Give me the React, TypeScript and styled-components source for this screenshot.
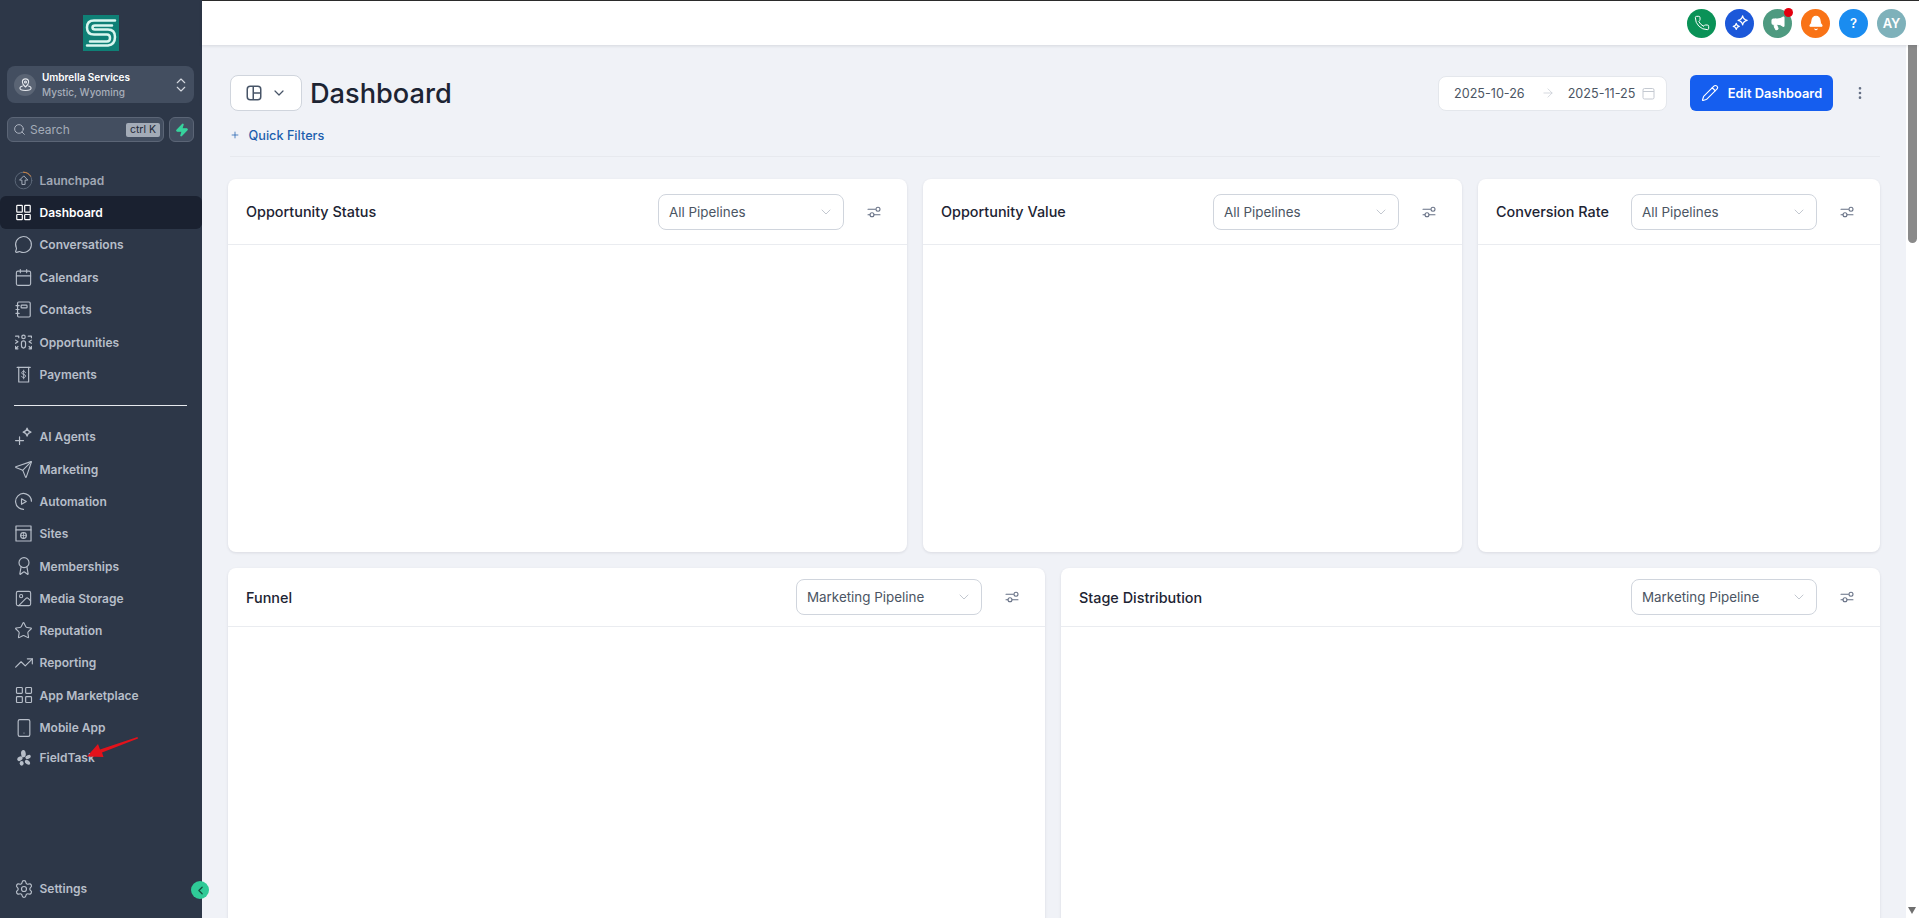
import type { ReactNode } from "react";
import styled, { createGlobalStyle } from "styled-components";
import {
  ArrowRight,
  Award,
  Bell,
  Calendar,
  ChevronDown,
  ChevronLeft,
  ChevronsUpDown,
  EllipsisVertical,
  Image,
  LayoutGrid,
  MessageCircle,
  Megaphone,
  Pencil,
  Phone,
  Plus,
  Search,
  Send,
  Settings,
  Smartphone,
  Star,
  TrendingUp,
  Zap,
} from "lucide-react";

const GlobalStyle = createGlobalStyle`
  html, body {
    margin: 0;
    height: 100%;
    overflow: hidden;
    font-family: Inter, "Liberation Sans", sans-serif;
  }

  * {
    box-sizing: border-box;
  }
`;

// hand drawn icons, the packages have nothing close to these
const IconSvg = ({ children }: { children: ReactNode }) => (
  <svg width="19" height="19" viewBox="0 0 24 24" fill="none" stroke="currentColor" strokeWidth="1.5" strokeLinecap="round" strokeLinejoin="round">
    {children}
  </svg>
);

const LaunchpadIcon = () => (
  <svg width="19" height="19" viewBox="0 0 24 24" fill="none" strokeWidth="1.2" strokeLinecap="round" strokeLinejoin="round">
    <circle cx="12" cy="12" r="10.5" stroke="#5d6879" />
    <path d="M12 1.5a10.5 10.5 0 0 1 9 5" stroke="#e08a3c" />
    <path d="M12 6.5 7 11.5h3v5.5h4v-5.5h3z" stroke="#aab2bf" />
  </svg>
);

const DashboardIcon = () => (
  <IconSvg>
    <rect x="3.500" y="3" width="7" height="8.500" rx="0.8" />
    <rect x="13.500" y="3" width="7" height="8.500" rx="0.8" />
    <rect x="3.500" y="14.500" width="7" height="6.500" rx="0.8" />
    <rect x="13.500" y="14.500" width="7" height="6.500" rx="0.8" />
  </IconSvg>
);

const ContactsIcon = () => (
  <IconSvg>
    <rect x="4.500" y="2.500" width="16" height="19" rx="1.500" />
    <rect x="9" y="6.500" width="7.500" height="3.500" rx="1" />
    <path d="M2.500 7h4M2.500 12h4M2.500 17h4" />
  </IconSvg>
);

const OpportunitiesIcon = () => (
  <IconSvg>
    <circle cx="12" cy="5" r="2.200" />
    <path d="M12 10c-2 0-2.600 1.400-2.600 2.600v3c0 1.400.9 3.400 2.600 3.400s2.600-2 2.600-3.400v-3C14.600 11.400 14 10 12 10z" />
    <path d="M2 4h4v2M18 4h4v2M2 9l3 2-3 2M22 9l-3 2 3 2M2 20l3-3M2 17v3h3M22 20l-3-3M22 17v3h-3" />
  </IconSvg>
);

const PaymentsIcon = () => (
  <IconSvg>
    <path d="M4 3h16.500" />
    <path d="M6 3v18.500h12.500V3" />
    <path d="M14.500 9.500c-.4-1-1.400-1.500-2.300-1.500-1.300 0-2.400.6-2.400 1.900 0 2.800 4.800 1.200 4.800 4 0 1.300-1.200 2-2.400 2-1.200 0-2.200-.6-2.600-1.600M12.200 6.500v11" strokeWidth="1.200" />
  </IconSvg>
);

const AgentsIcon = () => (
  <IconSvg>
    <path d="M16.500 1.500c.5 3 1.600 4.300 5 5-3.400.7-4.500 2-5 5-.5-3-1.600-4.300-5-5 3.400-.7 4.500-2 5-5z" />
    <path d="M7 12.500v9.500M2 17.200h10" />
  </IconSvg>
);

const AutomationIcon = () => (
  <IconSvg>
    <path d="M22 11.500A10 10 0 0 0 5 4.800a10 10 0 0 0 1 15.200A10 10 0 0 0 12 22" />
    <path d="m9.500 8.500 6 3.500-6 3.500z" />
  </IconSvg>
);

const SitesIcon = () => (
  <IconSvg>
    <rect x="2.500" y="2.500" width="19" height="19" />
    <path d="M2.500 7.500h19" />
    <circle cx="12" cy="14.500" r="3.600" />
    <path d="M8.400 14.500h7.200M12 11v7" strokeWidth="1" />
  </IconSvg>
);

const FieldTaskIcon = () => (
  <svg width="14" height="16" viewBox="0 0 24 24" fill="currentColor" preserveAspectRatio="none">
    <ellipse cx="11" cy="5.500" rx="4" ry="5.500" transform="rotate(-10 11 5.500)" />
    <ellipse cx="5" cy="13" rx="4.800" ry="3.200" transform="rotate(-25 5 13)" />
    <ellipse cx="19" cy="10.500" rx="4.800" ry="2.800" transform="rotate(-20 19 10.500)" />
    <ellipse cx="8" cy="20" rx="3.400" ry="3.600" />
    <ellipse cx="18" cy="18.500" rx="4.800" ry="3" transform="rotate(30 18 18.500)" />
  </svg>
);

const TuneIcon = () => (
  <svg width="16" height="16" viewBox="0 0 24 24" fill="none" stroke="#667085" strokeWidth="1.600" strokeLinecap="round">
    <path d="M3 8h11M3 16h3" />
    <circle cx="18" cy="8" r="3" />
    <circle cx="9" cy="16" r="3" />
    <path d="M12 16h9" />
  </svg>
);

const LogoMark = () => (
  <svg width="36" height="36" viewBox="0 0 36 36" fill="none">
    <rect width="36" height="36" fill="#0f8076" />
    <g stroke="#d9f6ef" strokeWidth="2.500" strokeLinecap="round">
      <path d="M32 5.500H11Q4 5.500 4 12.500T11 19.500H24Q27 19.500 27 23T24 26.500H7" />
      <path d="M29 10.500H12Q9.500 10.500 9.500 12.500T12 14.500H25Q32 14.500 32 22T25 30.500H4" />
    </g>
  </svg>
);

const LocationIcon = () => (
  <svg width="15" height="15" viewBox="0 0 24 24" fill="none" stroke="#e6e9ee" strokeWidth="1.700" strokeLinecap="round" strokeLinejoin="round">
    <path d="M12 16c-3-2.600-5-5-5-8a5 5 0 0 1 10 0c0 3-2 5.400-5 8z" />
    <circle cx="12" cy="8" r="1.600" />
    <path d="M7 14.500c-2.500.7-4 1.800-4 3.200C3 19.900 7 21.500 12 21.500s9-1.600 9-3.800c0-1.400-1.500-2.500-4-3.200" />
  </svg>
);

const StarsIcon = () => (
  <svg width="18" height="18" viewBox="0 0 24 24" fill="none" stroke="#ffffff" strokeWidth="1.700" strokeLinejoin="round" strokeLinecap="round">
    <path d="M15.500 2.500c.6 3.400 2.200 5 6 6-3.800 1-5.400 2.600-6 6-.6-3.400-2.200-5-6-6 3.800-1 5.400-2.600 6-6z" />
    <path d="M7 12.500c.4 2.400 1.400 3.500 4 4-2.600.5-3.600 1.600-4 4-.4-2.400-1.400-3.500-4-4 2.600-.5 3.600-1.600 4-4z" />
  </svg>
);

const ViewLayoutIcon = () => (
  <svg width="18" height="18" viewBox="0 0 24 24" fill="none" stroke="#475467" strokeWidth="2">
    <rect x="3" y="3" width="18" height="18" rx="4" />
    <path d="M11 3v18M11 12h10" />
  </svg>
);

const CalendarBoxIcon = () => (
  <svg width="13" height="13" viewBox="0 0 13 13" fill="none" stroke="#c4c9d1" strokeWidth="1">
    <rect x="1" y="1.500" width="11" height="10.500" rx="1.500" />
    <path d="M1 4.500h11" />
  </svg>
);

const NAV_TOP = [
  { label: "Launchpad", icon: <LaunchpadIcon />, dim: true },
  { label: "Dashboard", icon: <DashboardIcon />, active: true },
  { label: "Conversations", icon: <MessageCircle size={19} strokeWidth={1.4} /> },
  { label: "Calendars", icon: <Calendar size={19} strokeWidth={1.4} /> },
  { label: "Contacts", icon: <ContactsIcon /> },
  { label: "Opportunities", icon: <OpportunitiesIcon /> },
  { label: "Payments", icon: <PaymentsIcon /> },
];

const NAV_BOTTOM = [
  { label: "AI Agents", icon: <AgentsIcon /> },
  { label: "Marketing", icon: <Send size={19} strokeWidth={1.4} /> },
  { label: "Automation", icon: <AutomationIcon /> },
  { label: "Sites", icon: <SitesIcon /> },
  { label: "Memberships", icon: <Award size={20} strokeWidth={1.4} /> },
  { label: "Media Storage", icon: <Image size={19} strokeWidth={1.4} /> },
  { label: "Reputation", icon: <Star size={19} strokeWidth={1.4} /> },
  { label: "Reporting", icon: <TrendingUp size={20} strokeWidth={1.4} /> },
  { label: "App Marketplace", icon: <LayoutGrid size={20} strokeWidth={1.4} /> },
  { label: "Mobile App", icon: <Smartphone size={20} strokeWidth={1.4} /> },
  { label: "FieldTask", icon: <FieldTaskIcon />, compact: true },
];

const TOP_ROW = [
  { title: "Opportunity Status", value: "All Pipelines" },
  { title: "Opportunity Value", value: "All Pipelines" },
  { title: "Conversion Rate", value: "All Pipelines" },
];

const BOTTOM_ROW = [
  { title: "Funnel", value: "Marketing Pipeline" },
  { title: "Stage Distribution", value: "Marketing Pipeline" },
];

type CardProps = { title: string; value: string; low?: boolean };

const Card = ({ title, value, low }: CardProps) => (
  <CardLayout>
    <CardHeader $low={low}>
      <CardTitle>{title}</CardTitle>
      <SelectBox>
        {value}
        <ChevronDown size={16} color="#b4bac4" strokeWidth={1.2} />
      </SelectBox>
      <TuneButton>
        <TuneIcon />
      </TuneButton>
    </CardHeader>
  </CardLayout>
);

const App = () => {
  return (
    <>
      <GlobalStyle />
      <Page>
        <Sidebar>
          <LogoBox>
            <LogoMark />
          </LogoBox>

          <LocationBox>
            <LocationAvatar>
              <LocationIcon />
            </LocationAvatar>
            <LocationInfo>
              <LocationName>Umbrella Services</LocationName>
              <LocationPlace>Mystic, Wyoming</LocationPlace>
            </LocationInfo>
            <ChevronsUpDown size={18} color="#d5d9e0" strokeWidth={1.5} />
          </LocationBox>

          <SearchRow>
            <SearchBox>
              <Search size={13} color="#aeb5c1" strokeWidth={1.8} />
              <SearchText>Search</SearchText>
              <Shortcut>ctrl K</Shortcut>
            </SearchBox>
            <BoltButton>
              <Zap size={14} color="#37d39d" fill="#37d39d" />
            </BoltButton>
          </SearchRow>

          <NavList>
            {NAV_TOP.map((item) => (
              <NavItem key={item.label} $active={item.active} $dim={item.dim} $rowHeight={32.4}>
                <NavIcon>{item.icon}</NavIcon>
                {item.label}
              </NavItem>
            ))}
          </NavList>
          <NavDivider />
          <NavList>
            {NAV_BOTTOM.map((item) => (
              <NavItem key={item.label} $rowHeight={item.compact ? 28 : 32.3}>
                <NavIcon>{item.icon}</NavIcon>
                {item.label}
              </NavItem>
            ))}
          </NavList>

          <SettingsBox>
            <NavItem $rowHeight={32.3}>
              <NavIcon>
                <Settings size={20} strokeWidth={1.4} />
              </NavIcon>
              Settings
            </NavItem>
          </SettingsBox>

          <CollapseToggle>
            <ChevronLeft size={13} color="#14503f" strokeWidth={2.4} />
          </CollapseToggle>

          {/* red note someone drew on the screenshot */}
          <ArrowNote width="64" height="32" viewBox="0 0 64 32">
            <path d="M57 6.500 21 20.500l1.500 4.500L6 24.500 17 12l2 5.500L56.500 5z" fill="#e3121b" />
          </ArrowNote>
        </Sidebar>

        <MainColumn>
          <TopBar>
            <RoundButton $color="#0a9257">
              <Phone size={16} strokeWidth={1.5} />
            </RoundButton>
            <RoundButton $color="#1c58d9">
              <StarsIcon />
            </RoundButton>
            <RoundButton $color="#4e9a80">
              <Megaphone size={16} fill="#fff" strokeWidth={1.6} />
              <RedDot />
            </RoundButton>
            <RoundButton $color="#f97316">
              <Bell size={16} fill="#fff" strokeWidth={1.6} />
            </RoundButton>
            <RoundButton $color="#1a8cf0">?</RoundButton>
            <RoundButton $color="#7eb1ba">AY</RoundButton>
          </TopBar>

          <BodyRow>
            <Content>
              <HeaderBlock>
                <HeaderRow>
                  <ViewButton>
                    <ViewLayoutIcon />
                    <ChevronDown size={16} strokeWidth={1.8} />
                  </ViewButton>
                  <PageTitle>Dashboard</PageTitle>
                  <DateBox>
                    <DateText>2025-10-26</DateText>
                    <DateArrow>
                      <ArrowRight size={14} color="#c4c9d1" strokeWidth={1.2} />
                    </DateArrow>
                    <DateText>2025-11-25</DateText>
                    <DateCalendar>
                      <CalendarBoxIcon />
                    </DateCalendar>
                  </DateBox>
                  <EditButton>
                    <Pencil size={18} strokeWidth={1.5} />
                    Edit Dashboard
                  </EditButton>
                  <MoreButton>
                    <EllipsisVertical size={16} strokeWidth={2} />
                  </MoreButton>
                </HeaderRow>
                <FilterRow>
                  <Plus size={10} strokeWidth={1.8} />
                  <FilterLabel>Quick Filters</FilterLabel>
                </FilterRow>
              </HeaderBlock>

              <CardRowTop>
                {TOP_ROW.map((card) => (
                  <Card key={card.title} title={card.title} value={card.value} />
                ))}
              </CardRowTop>
              <CardRowBottom>
                {BOTTOM_ROW.map((card) => (
                  <Card key={card.title} title={card.title} value={card.value} low />
                ))}
              </CardRowBottom>
            </Content>

            <ScrollRail>
              <ScrollThumb />
              <ScrollArrow />
            </ScrollRail>
          </BodyRow>
        </MainColumn>
      </Page>
    </>
  );
};

export default App;

const Page = styled.div`
  display: flex;
  width: 100%;
  height: 100vh;
  overflow: hidden;
`;

const Sidebar = styled.aside`
  position: relative;
  flex: 0 0 202px;

  display: flex;
  flex-direction: column;

  background: #2d3748;
`;

const LogoBox = styled.div`
  display: flex;
  justify-content: center;

  padding: 15px 0;
`;

const LocationBox = styled.div`
  display: flex;
  align-items: center;
  gap: 6px;

  height: 37px;
  margin: 0 8px 0 7px;
  padding: 0 4px 0 7px;

  background: #434e60;
  border-radius: 8px;
`;

const LocationAvatar = styled.div`
  flex: 0 0 22px;

  display: flex;
  align-items: center;
  justify-content: center;

  height: 22px;

  background: #5a6474;
  border-radius: 50%;
`;

const LocationInfo = styled.div`
  flex: 1;

  display: flex;
  flex-direction: column;
  gap: 2px;
`;

const LocationName = styled.span`
  color: #ffffff;
  font-size: 10px;
  font-weight: 600;
  line-height: 13px;
`;

const LocationPlace = styled.span`
  color: #a8afbb;
  font-size: 10px;
  font-weight: 500;
  line-height: 13px;
`;

const SearchRow = styled.div`
  display: flex;
  gap: 5px;

  height: 25px;
  margin: 14px 8px 22px 7px;
`;

const SearchBox = styled.div`
  flex: 1;

  display: flex;
  align-items: center;
  gap: 4px;

  padding: 0 3px 0 5px;

  background: #434e60;
  border: 1px solid #5b6576;
  border-radius: 6px;
`;

const SearchText = styled.span`
  flex: 1;

  color: #a4acb8;
  font-size: 12px;
`;

const Shortcut = styled.span`
  padding: 1px 4px;

  color: #1f2937;
  font-size: 10.500px;
  line-height: 12px;

  background: #a3abb7;
  border-radius: 2px;
`;

const BoltButton = styled.div`
  flex: 0 0 25px;

  display: flex;
  align-items: center;
  justify-content: center;

  background: #434e60;
  border: 1px solid #5b6576;
  border-radius: 6px;
`;

const NavList = styled.nav`
  display: flex;
  flex-direction: column;
`;

const NavItem = styled.div<{ $active?: boolean; $dim?: boolean; $rowHeight: number }>`
  display: flex;
  align-items: center;
  gap: 6.500px;

  height: ${({ $rowHeight }) => $rowHeight}px;
  padding-left: 14px;

  color: ${({ $active, $dim }) => ($active ? "#ffffff" : $dim ? "#a0a7b4" : "#b7bec9")};
  font-size: 12px;
  font-weight: 600;

  background: ${({ $active }) => ($active ? "#1a2130" : "transparent")};
  border-radius: 6px;
`;

const NavIcon = styled.span`
  flex: 0 0 19px;
  min-width: 0;

  display: flex;
  align-items: center;
  justify-content: center;

  & > svg {
    flex-shrink: 0;
  }
`;

const NavDivider = styled.div`
  height: 1px;
  margin: 14px 15px 15px 14px;

  background: #e6e9ee;
`;

const SettingsBox = styled.div`
  margin-top: auto;
  padding-bottom: 13px;
`;

const CollapseToggle = styled.div`
  position: absolute;
  right: -7px;
  bottom: 19px;
  z-index: 2;

  display: flex;
  align-items: center;
  justify-content: center;

  width: 18px;
  height: 18px;

  background: #2fca97;
  border-radius: 50%;
`;

const ArrowNote = styled.svg`
  position: absolute;
  left: 81px;
  top: 732px;
`;

const MainColumn = styled.div`
  flex: 1;
  min-width: 0;

  display: flex;
  flex-direction: column;
`;

const TopBar = styled.header`
  position: relative;
  z-index: 1;
  flex: 0 0 45px;

  display: flex;
  align-items: center;
  justify-content: flex-end;
  gap: 9px;

  padding-right: 13px;

  background: #ffffff;
  border-top: 1px solid #2b2b2b;
  box-shadow: 0 1px 3px rgba(16, 24, 40, 0.12);
`;

const RoundButton = styled.div<{ $color: string }>`
  position: relative;

  display: flex;
  align-items: center;
  justify-content: center;

  width: 29px;
  height: 29px;

  color: #ffffff;
  font-size: 13px;
  font-weight: 600;

  background: ${({ $color }) => $color};
  border-radius: 50%;
`;

const RedDot = styled.span`
  position: absolute;
  top: -1px;
  right: -1px;

  width: 9px;
  height: 9px;

  background: #e3000f;
  border-radius: 50%;
`;

const BodyRow = styled.div`
  flex: 1;
  min-height: 0;

  display: flex;
`;

const Content = styled.main`
  flex: 1;
  min-width: 0;

  display: flex;
  flex-direction: column;
  gap: 16px;

  padding: 30px 26px 0;
  overflow: hidden;

  background: #f0f2f7;
`;

const HeaderBlock = styled.div`
  flex: none;

  margin: 0 0 6px 2px;
  padding-bottom: 11px;

  border-bottom: 1px solid #e7e9ee;
`;

const HeaderRow = styled.div`
  display: flex;
  align-items: center;

  height: 36px;
`;

const ViewButton = styled.div`
  display: flex;
  align-items: center;
  justify-content: center;
  gap: 8px;

  width: 72px;
  height: 36px;

  color: #475467;

  background: #ffffff;
  border: 1px solid #d0d5dd;
  border-radius: 8px;
`;

const PageTitle = styled.h1`
  flex: 1;

  margin: 0 0 0 8px;

  color: #1d2433;
  font-size: 27.200px;
  font-weight: 500;
`;

const DateBox = styled.div`
  display: flex;
  align-items: center;

  width: 229px;
  height: 35px;
  padding-left: 15px;

  background: #ffffff;
  border: 1px solid #e4e7ec;
  border-radius: 8px;
`;

const DateText = styled.span`
  flex: 0 0 70px;

  color: #4b5563;
  font-size: 12.600px;
  white-space: nowrap;
`;

const DateArrow = styled.span`
  display: flex;

  margin: 0 13px 0 16px;
`;

const DateCalendar = styled.span`
  display: flex;

  margin-left: 4px;
`;

const EditButton = styled.div`
  display: flex;
  align-items: center;
  justify-content: center;
  gap: 9px;

  width: 143px;
  height: 36px;
  margin-left: 23px;

  color: #ffffff;
  font-size: 12.800px;
  font-weight: 600;

  background: #155eef;
  border-radius: 6px;
`;

const MoreButton = styled.div`
  display: flex;
  align-items: center;
  justify-content: center;

  width: 20px;
  margin: 0 10px 0 17px;

  color: #667085;
`;

const FilterRow = styled.div`
  display: flex;
  align-items: center;
  gap: 8.500px;

  height: 20px;
  margin-top: 14px;

  color: #1d5fae;
`;

const FilterLabel = styled.span`
  font-size: 12.700px;
  font-weight: 500;
`;

const CardRowTop = styled.section`
  flex: 0 0 373px;

  display: grid;
  grid-template-columns: 679px 539px 1fr;
  gap: 16px;
`;

const CardRowBottom = styled.section`
  flex: 0 0 600px;

  display: grid;
  grid-template-columns: 817px 1fr;
  gap: 16px;
`;

const CardLayout = styled.article`
  background: #ffffff;
  border-radius: 8px;
  box-shadow: 0 1px 3px rgba(16, 24, 40, 0.1);
`;

const CardHeader = styled.div<{ $low?: boolean }>`
  display: flex;
  align-items: center;

  height: ${({ $low }) => ($low ? "59px" : "66px")};
  padding: 0 25px 0 18px;

  border-bottom: 1px solid #eaecf0;
`;

const CardTitle = styled.h2`
  flex: 1;

  margin: 0;

  color: #1d2433;
  font-size: 14.400px;
  font-weight: 500;
`;

const SelectBox = styled.div`
  display: flex;
  align-items: center;
  justify-content: space-between;

  width: 186px;
  height: 36px;
  padding: 0 9px 0 10px;

  color: #4b5563;
  font-size: 13.400px;

  background: #ffffff;
  border: 1px solid #d0d5dd;
  border-radius: 8px;
`;

const TuneButton = styled.div`
  display: flex;

  margin-left: 22px;
`;

const ScrollRail = styled.div`
  flex: 0 0 13px;

  display: flex;
  flex-direction: column;
  justify-content: space-between;

  background: #ffffff;
`;

const ScrollThumb = styled.div`
  width: 9px;
  height: 198px;
  margin-left: 2px;

  background: #8a8a8a;
  border-radius: 0 0 5px 5px;
`;

const ScrollArrow = styled.div`
  width: 0;
  height: 0;
  margin: 0 0 4px 2px;

  border-top: 7px solid #6f6f6f;
  border-left: 4.500px solid transparent;
  border-right: 4.500px solid transparent;
`;
